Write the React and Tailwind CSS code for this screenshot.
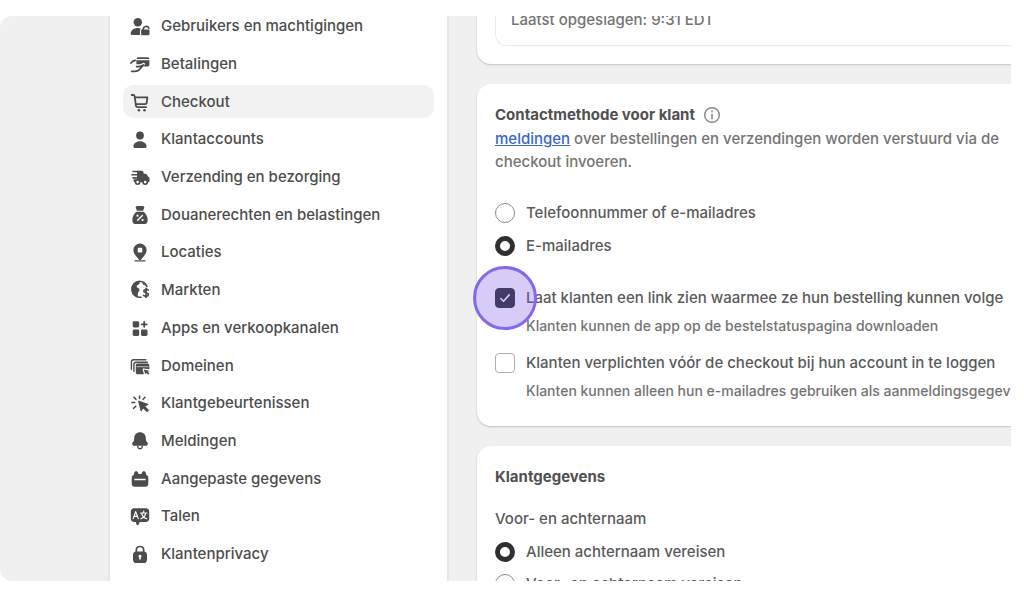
import React from "react";

function Icon({ children }) {
  return (
    <svg viewBox="0 0 24 24" className="size-6 shrink-0" fill="currentColor" aria-hidden="true">
      {children}
    </svg>
  );
}

const line = { fill: "none", stroke: "currentColor", strokeLinecap: "round", strokeLinejoin: "round" };

const icons = {
  users: (
    <Icon>
      <circle cx="9.800" cy="7.300" r="4.200" />
      <path d="M2.700 18.800c0-3.400 3-5.800 7-5.800 1.200 0 2.300.2 3.200.6-.7.600-.9 1.300-.9 2.200V20H3.900c-.8 0-1.200-.5-1.200-1.200z" />
      <path d="M14.500 15h.8v-.8a2.900 2.900 0 0 1 5.600-.9" {...line} strokeWidth="1.700" />
      <rect x="13.100" y="14.400" width="8.400" height="5.800" rx="1.300" />
    </Icon>
  ),
  payments: (
    <Icon>
      <path d="M10.300 5.200h9.200c1.100 0 1.800.7 1.900 1.700H8.800c.1-1 .6-1.700 1.500-1.700z" />
      <path d="M8.400 8.300h13v4.400c0 1.100-.8 1.800-1.900 1.800h-4.200l1.400-1.700c.8-1.200-.2-2.400-1.400-1.900l-3.600 1.400H8.400z" />
      <path d="M2.900 11c1.300-1.600 2.600-2.600 4.300-2.700M3.600 19.300h3c2.200 0 3.800-.6 5.100-2l3.700-4.300-4 1.600H8.600" {...line} strokeWidth="1.700" />
    </Icon>
  ),
  cart: (
    <Icon>
      <path d="M3.700 5h1.600c.7 0 1.200.4 1.300 1.100l1.300 9.200c.1 1.200.8 1.900 1.900 1.900h8.300M6.800 7.400h12.600l-.7 5.300c-.1.900-.7 1.500-1.600 1.500H7.800" {...line} strokeWidth="1.800" />
      <circle cx="10.900" cy="20.300" r="1.300" />
      <circle cx="16.500" cy="20.300" r="1.300" />
    </Icon>
  ),
  person: (
    <Icon>
      <circle cx="12" cy="7.500" r="3.900" />
      <path d="M5.400 18.600c0-3 2.900-5.300 6.600-5.300s6.600 2.300 6.600 5.300c0 .9-.5 1.400-1.300 1.400H6.700c-.8 0-1.300-.5-1.300-1.400z" />
    </Icon>
  ),
  truck: (
    <Icon>
      <path d="M7.500 5.700h6c1.100 0 1.700.5 1.900 1.500l.4 1.500h1.600c.8 0 1.300.3 1.600 1l.8 1.600 1 .7c.5.300.7.700.7 1.300v2.500c0 .9-.5 1.400-1.400 1.400H7c-1 0-1.500-.5-1.500-1.400v-1.600H9V5.700z" />
      <path d="M5 6.500h5M3.900 9.700h6M5 12.900h5" {...line} strokeWidth="1.600" />
      <circle cx="9.600" cy="17.100" r="2.100" fill="#fff" stroke="currentColor" strokeWidth="1.600" />
      <circle cx="17.200" cy="17.100" r="2.100" fill="#fff" stroke="currentColor" strokeWidth="1.600" />
    </Icon>
  ),
  bag: (
    <Icon>
      <path d="M9.500 2.900h5c1.600 0 2.200 1.200 1.600 2.400l-.7 1.500c.1.600-.3 1-.9 1h-5c-.6 0-1-.4-.9-1l-.7-1.500c-.6-1.200 0-2.400 1.600-2.400z" />
      <path d="M8.300 8.700h7.400c2.300 2 4 5.300 4 8.500 0 2.500-1.600 3.900-4 3.900H8.300c-2.400 0-4-1.400-4-3.900 0-3.200 1.700-6.500 4-8.500z" />
      <path d="m9.600 17.200 4.800-4.700" fill="none" stroke="#fff" strokeWidth="1.400" strokeLinecap="round" />
      <circle cx="9.500" cy="12.700" r="1.100" fill="#fff" />
      <circle cx="14.600" cy="17" r="1.100" fill="#fff" />
    </Icon>
  ),
  pin: (
    <Icon>
      <path fillRule="evenodd" d="M12 2.500a6.600 6.600 0 0 1 6.600 6.600c0 3.400-2.200 5.500-4.200 7.900l-1.200 1.500c-.7.800-1.700.8-2.400 0L9.600 17c-2-2.400-4.200-4.500-4.200-7.900A6.600 6.600 0 0 1 12 2.500zm-1.200 4.300c-.7 0-1.100.4-1.100 1.100v2.500c0 .7.400 1.100 1.100 1.100h2.400c.7 0 1.100-.4 1.100-1.100V7.900c0-.7-.4-1.100-1.100-1.100z" />
      <path d="M7 19.900h10" {...line} strokeWidth="1.300" />
    </Icon>
  ),
  globe: (
    <Icon>
      <path d="M11.500 3.300a8 8 0 1 0 1.600 15.900M11.500 3.300a8 8 0 0 1 7.400 5.200" {...line} strokeWidth="1.600" />
      <path d="M11.800 3.300c-.3 1.400.2 2-.8 3-1 .9-2.200.7-2.300 2.100-.1 1.200 1.300 1.300 2.200 2 .9.800.7 2.200 0 3-.8.900-1.100 1.400-1.100 2.700v2.700A8 8 0 0 1 4 8.500c1.200-3.200 4.200-5.400 7.800-5.200z" />
      <path d="M14.800 4.100c-.9 1.400-.2 2.700 1.300 2.900l2.200 1.100z" />
      <path d="M20.200 12.100c-.7-.9-4.300-1.200-4.500.9-.2 2.300 4.900 1.100 4.700 3.600-.2 2.200-4 1.900-5 .7M18 10.200v9.300" {...line} strokeWidth="1.600" />
    </Icon>
  ),
  apps: (
    <Icon>
      <rect x="4.700" y="5.200" width="6.500" height="6.300" rx="1.400" />
      <rect x="4.700" y="13.400" width="6.500" height="6.600" rx="1.400" />
      <rect x="13" y="13.400" width="6.500" height="6.600" rx="1.400" />
      <path d="M16.200 5.800v5M13.700 8.300h5" {...line} strokeWidth="1.800" />
    </Icon>
  ),
  domains: (
    <Icon>
      <path d="M3.400 15.200V7.900c0-1.300.8-2.200 2.200-2.200h12.300" {...line} strokeWidth="1.400" />
      <path d="M5.900 17.200v-6.600c0-1.500.8-2.400 2.300-2.400h11.200" {...line} strokeWidth="1.400" />
      <path d="M9.500 9.600h10c1.100 0 1.800.7 1.800 1.800v3.800l-5.600-.8c-.8-.1-1.200.3-1 1.100l1.200 4.700H9.600c-1.100 0-1.800-.7-1.800-1.800v-7c0-1.100.6-1.800 1.700-1.800z" />
      <path d="M8.500 12.700h12" fill="none" stroke="#fff" strokeOpacity=".7" strokeWidth=".9" />
      <path d="m15.800 15.500 5.900 1.400-2 .8 1.700 1.900-1.300 1.100-1.700-1.900-1 1.800z" />
    </Icon>
  ),
  click: (
    <Icon>
      <path d="M10.200 9.600c-.2-.7.200-1.100.9-.9l8.600 3c.8.300.8 1 .1 1.300l-2.500 1.300 3.100 3.300c.5.500.5 1-.1 1.500l-.6.600c-.5.500-1 .4-1.500-.1l-3.100-3.200-1.300 2.400c-.4.800-1.100.7-1.300-.1z" />
      <path d="M11.600 4v2.500M6 5.300l1.900 2M4 10.500h2.700M5.700 16.300l2-2.100M17 5.300l-1.900 2" {...line} strokeWidth="1.600" />
    </Icon>
  ),
  bell: (
    <Icon>
      <path d="M12 3.200c3.400 0 5.700 2.400 5.800 5.700 0 2 .2 3.100 1.300 4.200.8.800.9 1.500.6 2.300-.3.900-1 1.300-2 1.300H6.300c-1 0-1.700-.4-2-1.300-.3-.8-.2-1.500.6-2.300 1.100-1.100 1.300-2.200 1.300-4.200.1-3.300 2.400-5.700 5.800-5.700z" />
      <path d="M9.700 17.300c.1 1.700 1 2.500 2.300 2.500s2.200-.8 2.300-2.500" {...line} strokeWidth="1.400" />
    </Icon>
  ),
  data: (
    <Icon>
      <path fillRule="evenodd" d="M5.700 7.900l.5-2.100c.3-1 .9-1.500 1.900-1.500s1.700.5 2 1.500l.5 1.300h2.800l.5-1.300c.3-1 1-1.500 2-1.500s1.600.5 1.900 1.500l.5 2.100c1.300.4 2 1.400 2 2.800v6.100c0 1.900-1.100 3-2.900 3H6.600c-1.800 0-2.900-1.100-2.900-3v-6.100c0-1.400.7-2.400 2-2.800zm.7 3.900v1.400h11.200v-1.400z" />
    </Icon>
  ),
  language: (
    <Icon>
      <path d="M6.300 3.300h11.400c2.200 0 3.500 1.300 3.500 3.500v6.700c0 2.200-1.300 3.500-3.500 3.500h-6L10.500 19.700c-.5.800-1.500.8-1.900 0L7.900 17H6.300c-2.200 0-3.500-1.300-3.500-3.500V6.800c0-2.200 1.300-3.500 3.500-3.500z" />
      <path d="m5.200 13.600 2.500-7 2.500 7M6 11.400h3.400M12.600 8h6.300M15.700 6.200V8M17.700 8.200c-.4 2.500-2.200 4.700-4.800 5.500M13.800 8.700c.6 2.400 2.300 4.300 4.800 5" fill="none" stroke="#fff" strokeWidth="1.200" strokeLinecap="round" strokeLinejoin="round" />
    </Icon>
  ),
  lock: (
    <Icon>
      <path d="M8.300 10V7.900c0-2 1.500-3.400 3.700-3.400s3.700 1.400 3.700 3.400V10" {...line} strokeWidth="1.700" />
      <path fillRule="evenodd" d="M8.200 9.500h7.600c2 .1 3.200 1.400 3.200 3.300v4.900c0 2.100-1.300 3.400-3.400 3.400H8.400c-2.100 0-3.400-1.300-3.400-3.400v-4.900c0-1.900 1.200-3.200 3.200-3.300zM12 12.800a1.500 1.500 0 0 0-.8 2.800V17c0 .5.300.8.800.8s.8-.3.800-.8v-1.400a1.500 1.500 0 0 0-.8-2.800z" />
    </Icon>
  ),
};

const items = [
  ["Gebruikers en machtigingen", "users"],
  ["Betalingen", "payments"],
  ["Checkout", "cart"],
  ["Klantaccounts", "person"],
  ["Verzending en bezorging", "truck"],
  ["Douanerechten en belastingen", "bag"],
  ["Locaties", "pin"],
  ["Markten", "globe"],
  ["Apps en verkoopkanalen", "apps"],
  ["Domeinen", "domains"],
  ["Klantgebeurtenissen", "click"],
  ["Meldingen", "bell"],
  ["Aangepaste gegevens", "data"],
  ["Talen", "language"],
  ["Klantenprivacy", "lock"],
];

function Sidebar() {
  return (
    <nav aria-label="Instellingen" className="w-[341px] shrink-0 border-x-2 border-[#e8e8e8] bg-white">
      <ul className="-mt-1.5 flex h-full flex-col justify-between px-[13px] pb-1">
        {items.map(([label, icon]) => (
          <li key={label} className="shrink-0">
            <a
              href={"#" + icon}
              aria-current={icon === "cart" ? "page" : undefined}
              className={
                "flex h-[33px] items-center gap-[9px] rounded-[10px] px-[5px] text-[15px] text-[#4c4c4c] " +
                (icon === "cart" ? "bg-[#f2f2f2]" : "")
              }
            >
              {icons[icon]}
              {label}
            </a>
          </li>
        ))}
      </ul>
    </nav>
  );
}

function Card({ className = "", children }) {
  return (
    <section className={"shrink-0 rounded-l-[14px] bg-white pl-[18px] shadow-[0_1px_2px_rgba(0,0,0,0.2)] " + className}>
      {children}
    </section>
  );
}

function Radio({ id, name, label, defaultChecked }) {
  return (
    <div className="flex h-6 items-center gap-[11px]">
      <input
        type="radio"
        id={id}
        name={name}
        defaultChecked={defaultChecked}
        className="size-5 shrink-0 appearance-none rounded-full border border-[#8a8a8a] bg-white checked:border-[5px] checked:border-[#303030]"
      />
      <label htmlFor={id}>{label}</label>
    </div>
  );
}

function Checkbox({ id, label, help, defaultChecked, highlighted }) {
  return (
    <div>
      <div className="flex h-6 items-center gap-[11px]">
        <span className="relative flex size-5 shrink-0 items-center justify-center">
          <input
            type="checkbox"
            id={id}
            aria-describedby={id + "-help"}
            defaultChecked={defaultChecked}
            className="peer size-5 appearance-none rounded-[4px] border border-[#b0b0b0] bg-white checked:border-[#303030] checked:bg-[#303030]"
          />
          <svg viewBox="0 0 20 20" className="pointer-events-none absolute inset-0 hidden size-5 peer-checked:block" aria-hidden="true">
            <path d="m5.800 10.500 2.700 2.700 5.700-6.300" fill="none" stroke="#fff" strokeWidth="1.600" strokeLinecap="round" strokeLinejoin="round" />
          </svg>
          {highlighted && (
            <span className="pointer-events-none absolute -inset-[22px] z-10 rounded-full border-3 border-[#8468ee] bg-[#7b57e8]/30" />
          )}
        </span>
        <label htmlFor={id}>{label}</label>
      </div>
      <p id={id + "-help"} className="mt-[5px] pl-[31px] text-[14px] leading-[22px] text-[#747474]">
        {help}
      </p>
    </div>
  );
}

export default function App() {
  return (
    <div className="h-screen bg-white py-4 pr-[13px] font-['Inter',sans-serif] text-[15px] font-medium text-[#5a5a5a]">
      <div className="flex h-full overflow-hidden rounded-l-xl bg-[#f0f0f0] pl-[108px]">
        <Sidebar />
        <main className="flex min-w-0 flex-1 flex-col gap-5 overflow-hidden whitespace-nowrap pl-7 leading-6">
          <Card className="-mt-[33px] pb-[18px] pt-[15px]">
            <div className="rounded-bl-[12px] border-b border-l border-[#ebebeb] pb-[13px] pl-[15px] pt-[10px] text-[#747474]">
              <p>Laatst opgeslagen: 9:31 EDT</p>
            </div>
          </Card>

          <Card className="pb-6 pt-[19px]">
            <h2 className="flex h-6 items-center gap-2 font-bold text-[#505050]">
              Contactmethode voor klant
              <svg viewBox="0 0 18 18" className="size-[18px]" fill="none" stroke="#8c8c8c" aria-hidden="true">
                <circle cx="9" cy="9" r="7.300" strokeWidth="1.500" />
                <path d="M9 8.500v4.200" strokeWidth="1.600" strokeLinecap="round" />
                <circle cx="9" cy="5.500" r="1" fill="#8c8c8c" stroke="none" />
              </svg>
            </h2>
            <p className="leading-[23px] text-[#747474]">
              <a href="#meldingen" className="text-[#3a66c8] underline">meldingen</a> over bestellingen en verzendingen worden verstuurd via de
              <br />
              checkout invoeren.
            </p>
            <div className="mt-7 flex flex-col gap-[9px]">
              <Radio id="contact-phone" name="contact" label="Telefoonnummer of e-mailadres" />
              <Radio id="contact-email" name="contact" label="E-mailadres" defaultChecked />
            </div>
            <div className="mt-7 flex flex-col gap-[14px]">
              <Checkbox
                id="track"
                label="Laat klanten een link zien waarmee ze hun bestelling kunnen volge"
                help="Klanten kunnen de app op de bestelstatuspagina downloaden"
                defaultChecked
                highlighted
              />
              <Checkbox
                id="login"
                label="Klanten verplichten vóór de checkout bij hun account in te loggen"
                help="Klanten kunnen alleen hun e-mailadres gebruiken als aanmeldingsgegev"
              />
            </div>
          </Card>

          <Card className="pb-6 pt-[19px]">
            <h2 className="font-bold text-[#505050]">Klantgegevens</h2>
            <fieldset className="mt-[18px]">
              <legend>Voor- en achternaam</legend>
              <div className="mt-[9px] flex flex-col gap-2">
                <Radio id="name-last" name="name" label="Alleen achternaam vereisen" defaultChecked />
                <Radio id="name-full" name="name" label="Voor- en achternaam vereisen" />
              </div>
            </fieldset>
          </Card>
        </main>
      </div>
    </div>
  );
}
